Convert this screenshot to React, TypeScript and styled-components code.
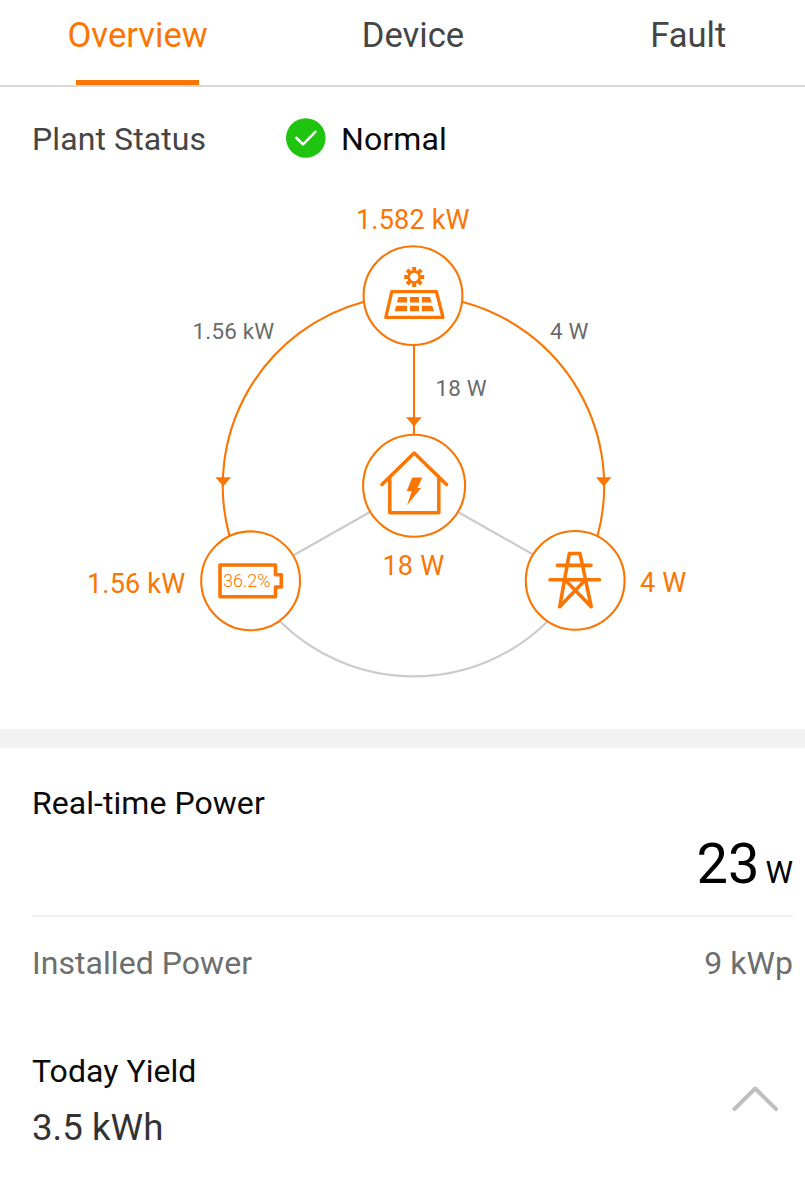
import React from "react";
import styled, { createGlobalStyle } from "styled-components";

const ORANGE = "#fb7503";
const GREY_LINE = "#cbcbcb";

const GlobalStyle = createGlobalStyle`
  body {
    margin: 0;
    background: #fff;
    font-family: Roboto, "Liberation Sans", sans-serif;
    overflow-x: hidden;
  }
`;

const Screen = styled.main`
  width: 805px;
  height: 1200px;
  overflow: hidden;
  background: #fff;
`;

const Tabs = styled.nav`
  display: grid;
  grid-template-columns: repeat(3, 275.3px);
  height: 85px;
  border-bottom: 2px solid #d9d9d9;
`;

const Tab = styled.div<{ $active?: boolean }>`
  display: flex;
  flex-direction: column;
  align-items: center;
  justify-content: space-between;
  font-size: 34.6px;
  line-height: 70px;
  color: ${(p) => (p.$active ? ORANGE : "#454545")};

  &::after {
    content: "";
    width: 123px;
    height: 5px;
    background: ${(p) => (p.$active ? ORANGE : "transparent")};
  }
`;

const StatusRow = styled.section`
  display: flex;
  align-items: center;
  box-sizing: border-box;
  height: 102px;
  padding: 2px 0 0 32px;
  font-size: 32px;
  letter-spacing: 0.1px;
`;

const StatusLabel = styled.span`
  width: 254px;
  line-height: 40px;
  color: #454545;
`;

const StatusIcon = styled.svg`
  width: 40px;
  height: 40px;
  margin: 0 15px 3px 0;
`;

const StatusValue = styled.span`
  line-height: 40px;
  color: #0a0a0a;
`;

const Diagram = styled.section`
  position: relative;
  height: 540px;
`;

const Flow = styled.svg`
  display: block;
  width: 805px;
  height: 540px;
`;

const DiagramLabel = styled.span<{ $x: number; $y: number; $muted?: boolean }>`
  position: absolute;
  left: ${(p) => p.$x}px;
  top: ${(p) => p.$y}px;
  font-size: ${(p) => (p.$muted ? 22.4 : 27)}px;
  line-height: 32px;
  letter-spacing: 0.2px;
  white-space: nowrap;
  color: ${(p) => (p.$muted ? "#6b6b6b" : ORANGE)};
`;

const ChargeLabel = styled(DiagramLabel)`
  font-size: 18px;
  font-weight: 300;
  letter-spacing: 0;
`;

const Divider = styled.div`
  height: 19px;
  background: #f2f2f2;
`;

const Details = styled.section`
  display: flex;
  flex-direction: column;
  padding: 35px 12px 0 32px;
`;

const Heading = styled.h2`
  margin: 0;
  font-size: 32px;
  font-weight: 400;
  line-height: 40px;
  letter-spacing: 0.05px;
  color: #0a0a0a;
`;

const PowerValue = styled.div`
  display: flex;
  justify-content: flex-end;
  align-items: baseline;
  gap: 6px;
  height: 92px;
  border-bottom: 2px solid #f0f0f0;
  font-size: 56px;
  line-height: 82px;
  color: #000;
`;

const Unit = styled.span`
  font-size: 31px;
`;

const InfoRow = styled.div`
  display: flex;
  justify-content: space-between;
  padding-top: 26px;
  font-size: 32px;
  line-height: 40px;
  letter-spacing: 0.05px;
  color: #6e6e6e;
`;

const YieldRow = styled.div`
  display: flex;
  justify-content: space-between;
  align-items: center;
  padding: 68px 13px 0 0;
`;

const YieldValue = styled.div`
  margin-top: 13px;
  font-size: 36.7px;
  line-height: 48px;
  color: #333;
`;

const Chevron = styled.svg`
  width: 50px;
  height: 30px;
  margin-bottom: 5px;
`;

const rays = [0, 45, 90, 135, 180, 225, 270, 315];

function SolarIcon() {
  return (
    <g fill="none" stroke={ORANGE}>
      <circle cx="414.2" cy="277" r="5.5" strokeWidth="2.6" />
      {rays.map((a) => (
        <path key={a} d="M414.2 271V267" strokeWidth="4" transform={`rotate(${a} 414.2 277)`} />
      ))}
      <path d="M391.8 291.6H436.4L443 317.4H385.8Z" strokeWidth="3.3" strokeLinejoin="round" />
      <g fill={ORANGE} stroke="none">
        <path d="M398.6 297H407V302.4H396.8ZM410 297H419V302.4H410ZM421.8 297H430L431.8 302.4H421.8Z" />
        <path d="M396.2 305.8H407V311.3H394.6ZM410 305.8H419V311.3H410ZM421.8 305.8H432.2L434 311.3H421.8Z" />
      </g>
    </g>
  );
}

function HouseIcon() {
  return (
    <g>
      <path
        d="M382 484.5L414.2 453L446.5 484.5M389.8 479V512.8H438.8V479"
        fill="none"
        stroke={ORANGE}
        strokeWidth="3.5"
        strokeLinecap="round"
        strokeLinejoin="round"
      />
      <path d="M412.2 477.6H422.3L417.5 488H421L407 505.3L411.8 491.3H406.7Z" fill={ORANGE} />
    </g>
  );
}

function BatteryIcon() {
  return (
    <path
      d="M220 565H275.5V574.7H281.3V587H275.5V596.7H220Z"
      fill="none"
      stroke={ORANGE}
      strokeWidth="3.6"
      strokeLinejoin="round"
    />
  );
}

function PylonIcon() {
  return (
    <path
      d="M559.7 606.7L569.3 553.5H580L591.2 606.7L565 579.7M559.7 606.7L585.5 579.7M557.5 565.4H591M550 579.7H599.5"
      fill="none"
      stroke={ORANGE}
      strokeWidth="3.6"
      strokeLinecap="round"
      strokeLinejoin="round"
    />
  );
}

function EnergyFlow() {
  return (
    <Diagram>
      <Flow viewBox="0 189 805 540">
        <g fill="none" stroke={GREY_LINE} strokeWidth="2.2">
          <path d="M280 621.5A190.5 190.5 0 0 0 547.5 621.5" />
          <path d="M294 555L370 512M458 512L534 555" />
        </g>
        <g fill="none" stroke={ORANGE} strokeWidth="2.1">
          <path d="M364 301.7A190.5 190.5 0 0 0 229.5 536" />
          <path d="M462 301.7A190.5 190.5 0 0 1 597.5 536" />
          <path d="M414 345V435" />
        </g>
        <g fill={ORANGE}>
          <path d="M215.5 477.2H231L223.3 486.5Z" />
          <path d="M596 477.2H611.5L603.7 486.5Z" />
          <path d="M406 417.2H421.8L414 426.5Z" />
        </g>
        <g fill="#fff" stroke={ORANGE} strokeWidth="2.1">
          <circle cx="413" cy="295.6" r="49.4" />
          <circle cx="414.1" cy="485.8" r="51" />
          <circle cx="250.6" cy="580.8" r="49.4" />
          <circle cx="575.2" cy="580.4" r="49.4" />
        </g>
        <SolarIcon />
        <HouseIcon />
        <BatteryIcon />
        <PylonIcon />
      </Flow>
      <DiagramLabel $x={356} $y={15}>1.582 kW</DiagramLabel>
      <DiagramLabel $x={192.5} $y={126} $muted>1.56 kW</DiagramLabel>
      <DiagramLabel $x={550} $y={126} $muted>4 W</DiagramLabel>
      <DiagramLabel $x={435.5} $y={183} $muted>18 W</DiagramLabel>
      <DiagramLabel $x={382.5} $y={361}>18 W</DiagramLabel>
      <DiagramLabel $x={87} $y={379}>1.56 kW</DiagramLabel>
      <DiagramLabel $x={640} $y={378}>4 W</DiagramLabel>
      <ChargeLabel $x={223} $y={376}>36.2%</ChargeLabel>
    </Diagram>
  );
}

export default function App() {
  return (
    <>
      <GlobalStyle />
      <Screen>
        <Tabs>
          <Tab $active>Overview</Tab>
          <Tab>Device</Tab>
          <Tab>Fault</Tab>
        </Tabs>
        <StatusRow>
          <StatusLabel>Plant Status</StatusLabel>
          <StatusIcon viewBox="0 0 40 40">
            <circle cx="19.8" cy="20" r="19.8" fill="#1ec40d" />
            <path
              d="M10.3 19.8L17 26.4L29.3 13.8"
              fill="none"
              stroke="#fff"
              strokeWidth="2.6"
              strokeLinecap="round"
              strokeLinejoin="round"
            />
          </StatusIcon>
          <StatusValue>Normal</StatusValue>
        </StatusRow>
        <EnergyFlow />
        <Divider />
        <Details>
          <Heading>Real-time Power</Heading>
          <PowerValue>
            23<Unit>W</Unit>
          </PowerValue>
          <InfoRow>
            <span>Installed Power</span>
            <span>9 kWp</span>
          </InfoRow>
          <YieldRow>
            <div>
              <Heading>Today Yield</Heading>
              <YieldValue>3.5 kWh</YieldValue>
            </div>
            <Chevron viewBox="0 0 50 30">
              <path
                d="M4.5 25L25.2 4.5L46 25"
                fill="none"
                stroke="#bfbfbf"
                strokeWidth="4"
                strokeLinecap="round"
                strokeLinejoin="round"
              />
            </Chevron>
          </YieldRow>
        </Details>
      </Screen>
    </>
  );
}
